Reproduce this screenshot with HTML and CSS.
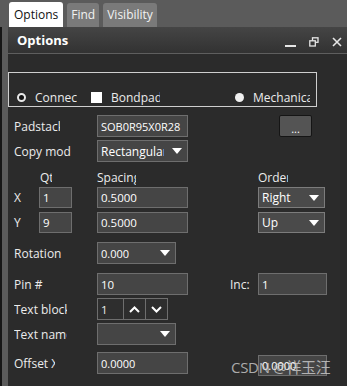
FILE: index.html
```html
<!DOCTYPE html>
<html lang="en">
<head>
    <meta charset="UTF-8">
    <title>Options</title>
    <link rel="stylesheet" href="styles.css">
</head>
<body>
    <div class="tabs">
        <div class="tab active">Options</div>
        <div class="tab">Find</div>
        <div class="tab">Visibility</div>
    </div>
    <div class="main">
        <div class="gutter"></div>
        <div class="panel">
            <div class="panel-head">
                <span class="title">Options</span>
                <div class="head-icons">
                    <svg width="11" height="10" viewBox="0 0 11 10"><rect x="0" y="8" width="11" height="2" fill="#e6e6e6"/></svg>
                    <svg width="10" height="10" viewBox="0 0 10 10" fill="none" stroke="#e6e6e6" stroke-width="1.3"><rect x="3.5" y="0.8" width="5.5" height="4.5"/><rect x="0.8" y="3.8" width="5.5" height="5.2" fill="#353535"/></svg>
                    <svg width="10" height="10" viewBox="0 0 10 10" stroke="#e6e6e6" stroke-width="1.6"><path d="M1 1L9 9M9 1L1 9"/></svg>
                </div>
            </div>
            <div class="panel-body">
                <div class="group">
                    <div class="opt opt-conn"><span class="radio checked"></span><span class="opt-text w-42">Connect</span></div>
                    <div class="opt opt-bond"><span class="check"></span><span class="opt-text w-49">Bondpad</span></div>
                    <div class="opt opt-mech"><span class="radio filled"></span><span class="opt-text w-57">Mechanical</span></div>
                </div>

                <div class="row r-pad">
                    <div class="lbl"><span class="clip w-46">Padstack</span></div>
                    <div class="field w-91 small">SOB0R95X0R28</div>
                    <button class="dots">...</button>
                </div>

                <div class="row r-copy">
                    <div class="lbl"><span class="clip w-57">Copy mode</span></div>
                    <div class="select w-91"><span class="clip w-63">Rectangular</span><span class="arrow"></span></div>
                </div>

                <div class="row r-heads">
                    <span class="clip w-12 h-qty">Qty</span>
                    <span class="clip w-39 h-spc">Spacing</span>
                    <span class="clip w-30 h-ord">Order</span>
                </div>

                <div class="row r-x">
                    <div class="axis">X</div>
                    <div class="field w-33">1</div>
                    <div class="field w-91 spc">0.5000</div>
                    <div class="select w-67 ord">Right<span class="arrow"></span></div>
                </div>

                <div class="row r-y">
                    <div class="axis">Y</div>
                    <div class="field w-33">9</div>
                    <div class="field w-91 spc">0.5000</div>
                    <div class="select w-67 ord">Up<span class="arrow"></span></div>
                </div>

                <div class="row r-rot">
                    <div class="lbl"><span class="clip w-60">Rotation</span></div>
                    <div class="select w-79 small">0.000<span class="arrow"></span></div>
                </div>

                <div class="row r-pin">
                    <div class="lbl"><span class="clip w-60">Pin #</span></div>
                    <div class="field w-91">10</div>
                    <span class="inc">Inc:</span>
                    <div class="field w-69">1</div>
                </div>

                <div class="row r-tb">
                    <div class="lbl"><span class="clip w-53">Text block</span></div>
                    <div class="spin">
                        <div class="spin-val">1</div>
                        <div class="spin-btn"><svg width="11" height="7" viewBox="0 0 11 7" fill="none" stroke="#fff" stroke-width="2"><path d="M1 6L5.5 1.5L10 6"/></svg></div>
                        <div class="spin-btn"><svg width="11" height="7" viewBox="0 0 11 7" fill="none" stroke="#fff" stroke-width="2"><path d="M1 1L5.5 5.5L10 1"/></svg></div>
                    </div>
                </div>

                <div class="row r-tn">
                    <div class="lbl"><span class="clip w-53">Text name</span></div>
                    <div class="select w-79"><span class="arrow"></span></div>
                </div>

                <div class="row r-off">
                    <div class="lbl"><span class="clip w-41">Offset X</span></div>
                    <div class="field w-91 small">0.0000</div>
                    <div class="field w-69 small off2">0.0000</div>
                </div>
            </div>
        </div>
    </div>
    <div class="watermark">CSDN @祥玉汪</div>
</body>
</html>
```

FILE: styles.css
```css
body {
    margin: 0;
    width: 347px;
    height: 386px;
    overflow: hidden;
    background-color: #5b5b5b;
    font-family: "Open Sans", "Noto Sans CJK SC", sans-serif;
    font-size: 12px;
    color: #ececec;
    position: relative;
}
.tabs {
    display: flex;
    align-items: flex-end;
    height: 27px;
    padding-left: 9px;
    gap: 4px;
    box-sizing: border-box;
}
.tab {
    height: 24px;
    line-height: 24px;
    padding: 0 4px;
    background-color: #7a7a7a;
    color: #f2f2f2;
    border-radius: 3px 3px 0 0;
    font-size: 12px;
}
.tab.active {
    height: 25px;
    line-height: 25px;
    background-color: #fff;
    color: #111;
    padding: 0 5px;
}
.main {
    display: flex;
    height: 359px;
}
.gutter {
    width: 6px;
    border-left: 2px solid #161616;
    background-color: #5b5b5b;
}
.panel {
    flex: 1;
    background-color: #2b2b2b;
}
.panel-head {
    height: 26px;
    display: flex;
    align-items: center;
    justify-content: space-between;
    background: linear-gradient(#454545, #323232);
    border-bottom: 1px solid #5e5e5e;
}
.title {
    font-weight: bold;
    font-size: 13px;
    color: #fff;
    padding-left: 9px;
}
.head-icons {
    display: flex;
    align-items: center;
    gap: 13px;
    padding-right: 5px;
    padding-top: 3px;
}
.panel-body {
    display: flex;
    flex-direction: column;
}
.group {
    margin-top: 18px;
    width: 309px;
    height: 35px;
    box-sizing: border-box;
    border: 1px solid #cfcfcf;
    display: flex;
    align-items: flex-end;
    padding-bottom: 1px;
}
.opt {
    display: flex;
    align-items: center;
    height: 15px;
}
.opt-conn { margin-left: 8px; }
.opt-bond { margin-left: 14px; }
.opt-mech { margin-left: 75px; }
.opt-text {
    overflow: hidden;
    white-space: nowrap;
    margin-left: 9px;
}
.radio {
    width: 9px;
    height: 9px;
    border-radius: 50%;
    box-sizing: border-box;
    background-color: #f0f0f0;
}
.radio.checked {
    border: 2px solid #e8e8e8;
    background-color: #111;
}
.check {
    width: 11px;
    height: 11px;
    background-color: #fff;
    margin-top: -1px;
}
.row {
    display: flex;
    align-items: center;
    height: 22px;
    padding-left: 6px;
}
.r-pad { margin-top: 8px; }
.r-copy { margin-top: 3px; }
.r-heads { margin-top: 6px; height: 19px; }
.r-x { height: 21px; }
.r-y { margin-top: 4px; height: 21px; }
.r-rot { margin-top: 9px; }
.r-pin { margin-top: 9px; }
.r-tb { margin-top: 3px; }
.r-tn { margin-top: 3px; }
.r-off { margin-top: 7px; }
.lbl {
    width: 83px;
    flex: none;
}
.clip {
    display: inline-block;
    overflow: hidden;
    white-space: nowrap;
    vertical-align: middle;
}
.w-12 { width: 12px; }
.w-30 { width: 30px; }
.w-33 { width: 33px; }
.w-39 { width: 39px; }
.w-41 { width: 41px; }
.w-42 { width: 42px; }
.w-46 { width: 46px; }
.w-49 { width: 49px; }
.w-53 { width: 53px; }
.w-57 { width: 57px; }
.w-60 { width: 60px; }
.w-63 { width: 63px; }
.w-67 { width: 67px; }
.w-69 { width: 69px; }
.w-79 { width: 79px; }
.w-91 { width: 91px; }
.h-qty { margin-left: 26px; }
.h-spc { margin-left: 45px; }
.h-ord { margin-left: 122px; }
.field, .select {
    height: 100%;
    box-sizing: border-box;
    border: 1px solid #6e6e6e;
    background-color: #454545;
    color: #fff;
    padding-left: 3px;
    display: flex;
    align-items: center;
    flex: none;
    font-size: 11.5px;
}
.small { font-size: 11px; }
.select {
    position: relative;
    font-size: 12px;
}
.select.small { font-size: 11px; }
.arrow {
    position: absolute;
    right: 5px;
    top: 7px;
    border-left: 5.5px solid transparent;
    border-right: 5.5px solid transparent;
    border-top: 6px solid #fff;
}
.ord {
    background-color: #4a4a4a;
    border-color: #7c7c7c;
}
.axis {
    width: 25px;
    flex: none;
}
.spc { margin-left: 25px; }
.ord { margin-left: 70px; }
.dots {
    margin-left: 91px;
    width: 33px;
    height: 22px;
    background-color: #545454;
    border: 1px solid #151515;
    border-radius: 2px;
    color: #fff;
    font-family: "Open Sans", sans-serif;
    font-size: 11px;
    padding: 4px 0 0;
}
.inc {
    margin-left: 42px;
    width: 28px;
}
.spin {
    display: flex;
    height: 100%;
}
.spin-val, .spin-btn {
    box-sizing: border-box;
    border: 1px solid #6e6e6e;
    background-color: #2e2e2e;
    display: flex;
    align-items: center;
}
.spin-val {
    width: 27px;
    padding-left: 3px;
    font-size: 11.5px;
}
.spin-btn {
    width: 22px;
    justify-content: center;
    border-left: none;
}
.off2 {
    margin-left: 70px;
    height: 21px;
    margin-top: 5px;
}
.watermark {
    position: absolute;
    left: 231px;
    top: 356px;
    font-size: 15px;
    color: rgba(215, 215, 215, 0.75);
    letter-spacing: -0.3px;
}
```
